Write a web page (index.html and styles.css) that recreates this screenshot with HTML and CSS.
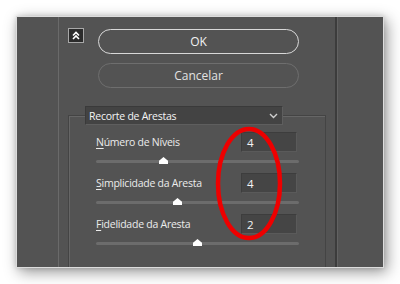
FILE: index.html
```html
<!DOCTYPE html>
<html>
<head>
<meta charset="utf-8">
<link rel="stylesheet" href="styles.css">
</head>
<body>
<div class="panel">
  <div class="side-left"></div>
  <div class="main">
    <div class="top">
      <div class="collapse">
        <svg width="8" height="9" viewBox="0 0 8 9"><path d="M1 4.5 L4 1.5 L7 4.5 M1 8 L4 5 L7 8" fill="none" stroke="#fff" stroke-width="1.6"/></svg>
      </div>
      <div class="buttons">
        <div class="btn btn-ok">OK</div>
        <div class="btn btn-cancel">Cancelar</div>
      </div>
    </div>
    <div class="group">
      <div class="select">
        <span>Recorte de Arestas</span>
        <svg width="9" height="6" viewBox="0 0 9 6"><path d="M1 1 L4.5 4.5 L8 1" fill="none" stroke="#cfcfcf" stroke-width="1.4"/></svg>
      </div>
      <div class="row">
        <div class="line"><span class="label"><u>N</u>úmero de Níveis</span><span class="field">4</span></div>
        <div class="slider"><div class="track"></div><div class="thumb" style="left: 67px"></div></div>
      </div>
      <div class="row">
        <div class="line"><span class="label"><u>S</u>implicidade da Aresta</span><span class="field">4</span></div>
        <div class="slider"><div class="track"></div><div class="thumb" style="left: 81px"></div></div>
      </div>
      <div class="row">
        <div class="line"><span class="label"><u>F</u>idelidade da Aresta</span><span class="field">2</span></div>
        <div class="slider"><div class="track"></div><div class="thumb" style="left: 101px"></div></div>
      </div>
    </div>
  </div>
  <div class="side-right"></div>
</div>
<svg class="mark" width="400" height="284" viewBox="0 0 400 284"><ellipse cx="249" cy="183.5" rx="31" ry="54.5" fill="none" stroke="#ee0000" stroke-width="4.5"/></svg>
</body>
</html>
```

FILE: styles.css
```css
html, body {
  margin: 0;
  padding: 0;
  background: #ffffff;
  width: 400px;
  height: 284px;
  overflow: hidden;
  font-family: "Open Sans", "Noto Sans", sans-serif;
}

.panel {
  margin: 16px 0 0 16px;
  width: 368px;
  height: 252px;
  box-sizing: border-box;
  background: #535353;
  border: 1px solid #dcdcdc;
  display: flex;
  overflow: hidden;
  box-shadow: 3px 4px 14px rgba(0, 0, 0, 0.42), 0 0 5px rgba(0, 0, 0, 0.15);
}

.side-left {
  width: 41px;
  flex: none;
  border-right: 1px solid #6a6a6a;
}

.main {
  width: 278px;
  flex: none;
  box-sizing: border-box;
  padding: 11px 0 0 9px;
  border-right: 2px solid #3c3c3c;
  display: flex;
  flex-direction: column;
}

.side-right {
  flex: 1;
  border-left: 1px solid #626262;
}

.top {
  display: flex;
  align-items: flex-start;
}

.collapse {
  width: 16px;
  height: 15px;
  box-sizing: border-box;
  border: 1px solid #a8a8a8;
  background: #2b2b2b;
  display: flex;
  align-items: center;
  justify-content: center;
}

.buttons {
  margin-left: 14px;
  margin-top: 1px;
  display: flex;
  flex-direction: column;
  gap: 9px;
}

.btn {
  width: 201px;
  height: 25px;
  box-sizing: border-box;
  border-radius: 13px;
  display: flex;
  align-items: center;
  justify-content: center;
  font-size: 12px;
  color: #f2f2f2;
}

.btn-ok {
  border: 1.5px solid #d8d8d8;
}

.btn-cancel {
  border: 1.5px solid #6e6e6e;
  color: #e2e2e2;
}

.group {
  margin-top: 27px;
  width: 258px;
  flex: 1;
  box-sizing: border-box;
  border: 1px solid #444444;
  border-bottom: none;
  box-shadow: inset 1px 1px 0 #666666;
}

.select {
  margin: -10px 0 0 16px;
  width: 198px;
  height: 19px;
  box-sizing: border-box;
  background: #434343;
  border: 1px solid #3a3a3a;
  border-right-color: #5e5e5e;
  border-bottom-color: #5e5e5e;
  display: flex;
  align-items: center;
  justify-content: space-between;
  padding: 0 4px 0 3px;
  font-size: 10.5px;
  letter-spacing: -0.25px;
  color: #f4f4f4;
}

.row {
  margin-left: 27px;
  width: 203px;
}

.select + .row {
  margin-top: 7px;
}

.line {
  height: 20px;
  display: flex;
  align-items: center;
  justify-content: space-between;
  padding-right: 2px;
}

.label {
  font-size: 10.5px;
  letter-spacing: -0.25px;
  color: #ececec;
}

.label u {
  text-decoration-thickness: 1px;
  text-underline-offset: 2px;
}

.field {
  width: 56px;
  height: 20px;
  box-sizing: border-box;
  background: #454545;
  border: 1px solid #3d3d3d;
  border-right-color: #5a5a5a;
  border-bottom-color: #5a5a5a;
  font-size: 11.5px;
  color: #f4f4f4;
  padding-left: 5px;
  display: flex;
  align-items: center;
}

.slider {
  position: relative;
  height: 21px;
}

.track {
  position: absolute;
  left: 0;
  right: 0;
  top: 8px;
  height: 3px;
  border-radius: 2px;
  background: #6c6c6c;
}

.thumb {
  position: absolute;
  top: 5px;
  width: 9px;
  height: 7px;
  margin-left: -4px;
  background: #ffffff;
  clip-path: polygon(50% 0, 100% 55%, 100% 100%, 0 100%, 0 55%);
}

.mark {
  position: absolute;
  left: 0;
  top: 0;
  pointer-events: none;
}
```
